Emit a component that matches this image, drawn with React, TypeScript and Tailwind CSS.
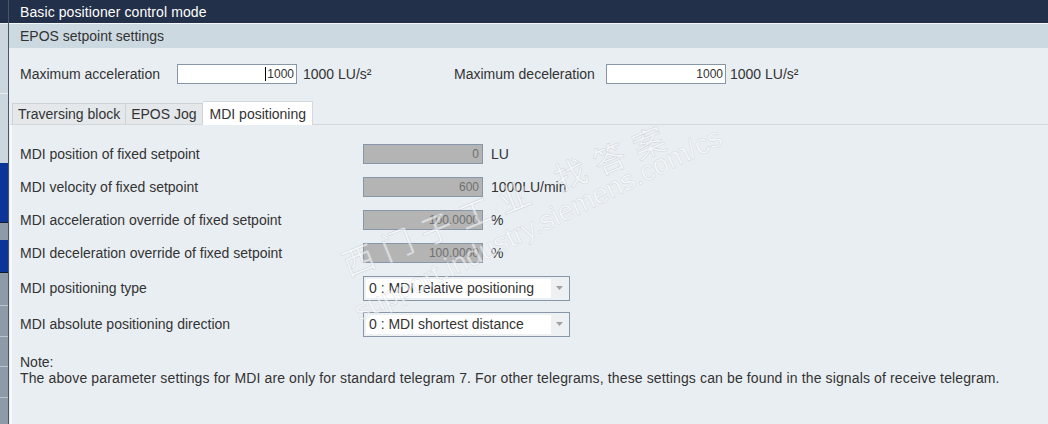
import React from "react";

const font = "font-['Liberation_Sans',Arial,'Noto_Sans_CJK_SC',sans-serif]";

function Sidebar() {
  return (
    <div className="w-[9px] h-full flex flex-col border-r border-[#4b5563] shrink-0">
      <div className="h-[23px] bg-[#233049]" />
      <div className="h-[71px] bg-[#cbd6de] border-t border-[#e8eef2] border-b border-[#9aa8b5]" />
      <div className="h-[69px] bg-[#cbd6de]" />
      <div className="h-[60px] bg-[#0b3596] border-b border-[#1a1a2a]" />
      <div className="h-[17px] bg-[#8d9ba9]" />
      <div className="h-[33px] bg-[#0b3596] border-b border-[#111827]" />
      <div className="h-[33px] bg-[#8d9ba9] border-b border-[#b9c3cc]" />
      <div className="h-[31px] bg-[#8d9ba9] border-b border-[#b9c3cc]" />
      <div className="h-[30px] bg-[#8d9ba9] border-b border-[#b9c3cc]" />
      <div className="h-[31px] bg-[#8d9ba9] border-b border-[#b9c3cc]" />
      <div className="flex-1 bg-[#8d9ba9]" />
    </div>
  );
}

function ReadOnlyRow({ label, value, unit }: { label: string; value: string; unit: string }) {
  return (
    <div className="flex items-center h-[20px]">
      <div className="w-[343px]">{label}</div>
      <div className="w-[120px] h-[20px] bg-[#b4b4b4] border border-[#8797a8] text-[12px] text-[#707070] flex items-center justify-end pr-[3px]">
        {value}
      </div>
      <div className="ml-[8px]">{unit}</div>
    </div>
  );
}

function SelectRow({ label, value }: { label: string; value: string }) {
  return (
    <div className="flex items-center h-[24px]">
      <div className="w-[343px]">{label}</div>
      <div className="w-[207px] h-[25px] border border-[#8797a8] bg-[#eef1f4] flex p-[2px]">
        <div className="w-[185px] bg-white flex items-center pl-[3px] text-[#333]">{value}</div>
        <div className="flex-1 flex items-center justify-center">
          <svg width="7" height="4" viewBox="0 0 7 4">
            <path d="M0 0 L7 0 L3.5 4 Z" fill="#a0a0a0" />
          </svg>
        </div>
      </div>
    </div>
  );
}

export default function App() {
  return (
    <div className={`w-[1048px] h-[424px] flex overflow-hidden relative ${font} text-[14px] text-[#333] bg-[#e9eef2]`}>
      <Sidebar />
      <div className="flex-1 flex flex-col relative">
        <div className="h-[23px] bg-[#233049] text-white pl-[11px] flex items-center leading-none tracking-[0.1px]">
          Basic positioner control mode
        </div>
        <div className="h-px bg-[#f4f7f9]" />
        <div className="h-[24px] bg-[#cdd9e1] pl-[11px] flex items-center">EPOS setpoint settings</div>

        <div className="flex items-center h-[20px] mt-[16px] pl-[11px]">
          <div className="w-[157px]">Maximum acceleration</div>
          <div className="w-[120px] h-[20px] bg-white border border-[#8797a8] flex items-center justify-end pr-[2px] text-[12px] text-[#333]">
            <span className="w-px h-[14px] bg-black mr-[1px]" />
            1000
          </div>
          <div className="w-[157px] pl-[6px]">1000 LU/s²</div>
          <div className="w-[152px]">Maximum deceleration</div>
          <div className="w-[120px] h-[20px] bg-white border border-[#8797a8] flex items-center justify-end pr-[2px] text-[12px] text-[#333]">
            1000
          </div>
          <div className="pl-[4px]">1000 LU/s²</div>
        </div>

        <div className="mt-[17px] ml-[1px] flex items-end h-[24px] border-b border-[#d3d8dc]">
          <div className="ml-[2px] h-[21px] px-[5px] bg-[#e4e8eb] border border-b-0 border-[#cdd2d6] flex items-center">
            Traversing block
          </div>
          <div className="h-[21px] px-[5px] bg-[#e4e8eb] border border-l-0 border-b-0 border-[#cdd2d6] flex items-center">
            EPOS Jog
          </div>
          <div className="h-[24px] -mb-px w-[110px] pl-[7px] bg-white border border-l-0 border-b-0 border-[#d3d8dc] flex items-start pt-[2px]">
            MDI positioning
          </div>
        </div>

        <div className="flex-1 ml-[1px] border-l-2 border-[#f7f9fa] pl-[8px] pt-[19px] flex flex-col">
          <div className="flex flex-col gap-[13px]">
            <ReadOnlyRow label="MDI position of fixed setpoint" value="0" unit="LU" />
            <ReadOnlyRow label="MDI velocity of fixed setpoint" value="600" unit="1000LU/min" />
            <ReadOnlyRow label="MDI acceleration override of fixed setpoint" value="100.0000" unit="%" />
            <ReadOnlyRow label="MDI deceleration override of fixed setpoint" value="100.0000" unit="%" />
          </div>
          <div className="flex flex-col gap-[12px] mt-[13px]">
            <SelectRow label="MDI positioning type" value="0 : MDI relative positioning" />
            <SelectRow label="MDI absolute positioning direction" value="0 : MDI shortest distance" />
          </div>
          <div className="mt-[18px] leading-[16px]">
            <div>Note:</div>
            <div className="tracking-[0.13px] whitespace-nowrap">
              The above parameter settings for MDI are only for standard telegram 7. For other telegrams, these settings can be found in the signals of receive telegram.
            </div>
          </div>
        </div>
      </div>

      <div className="absolute inset-0 pointer-events-none" aria-hidden="true">
        <div className="absolute left-[350px] top-[250px] origin-bottom-left -rotate-[22deg] whitespace-nowrap text-[32px] leading-none text-white/55 [-webkit-text-stroke:0.6px_rgba(160,172,184,0.4)] tracking-[10px]">
          西门子工业 找答案
        </div>
        <div className="absolute left-[362px] top-[298px] origin-bottom-left -rotate-[26deg] whitespace-nowrap text-[28px] leading-none text-white/55 [-webkit-text-stroke:0.5px_rgba(160,172,184,0.4)]">
          support.industry.siemens.com/cs
        </div>
      </div>
    </div>
  );
}
